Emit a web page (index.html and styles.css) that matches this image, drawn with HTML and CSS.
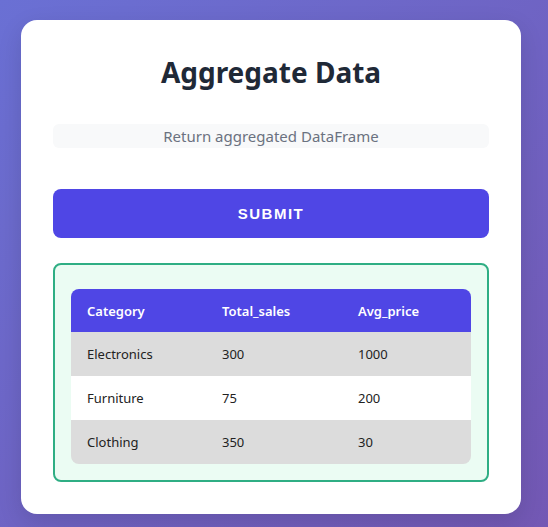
FILE: index.html
```html
<!DOCTYPE html>
<html>
<head>
<meta charset="utf-8">
<link rel="stylesheet" href="styles.css">
</head>
<body>
<div class="card">
  <h2 class="title">Aggregate Data</h2>
  <div class="desc">Return aggregated DataFrame</div>
  <button class="submit">SUBMIT</button>
  <div class="result">
    <table class="data">
      <colgroup><col class="c1"><col class="c2"><col class="c3"></colgroup>
      <thead>
        <tr><th>Category</th><th>Total_sales</th><th>Avg_price</th></tr>
      </thead>
      <tbody>
        <tr><td>Electronics</td><td>300</td><td>1000</td></tr>
        <tr><td>Furniture</td><td>75</td><td>200</td></tr>
        <tr><td>Clothing</td><td>350</td><td>30</td></tr>
      </tbody>
    </table>
  </div>
</div>
</body>
</html>
```
FILE: styles.css
```css
html, body { margin: 0; padding: 0; }
body {
  min-height: 527px;
  background: linear-gradient(135deg, #6a70d4 0%, #7358b4 100%);
  font-family: "Noto Sans", "Open Sans", sans-serif;
  padding: 20px 0 0 21px;
  box-sizing: border-box;
}
.card {
  width: 500px;
  box-sizing: border-box;
  background: #fff;
  border-radius: 16px;
  padding: 32px;
  box-shadow: 0 8px 24px rgba(0,0,0,0.12);
}
.title {
  margin: 0 0 32px;
  text-align: center;
  font-size: 28px;
  font-weight: 700;
  line-height: 40px;
  color: #1f2937;
}
.desc {
  background: #f8f9fa;
  border-radius: 6px;
  text-align: center;
  color: #6b7280;
  font-size: 15px;
  line-height: 24px;
  margin-bottom: 41px;
}
.submit {
  display: block;
  width: 100%;
  height: 49px;
  border: none;
  border-radius: 8px;
  background: #4f46e5;
  color: #fff;
  font-family: "Liberation Sans", Arial, sans-serif;
  font-weight: 700;
  font-size: 15px;
  letter-spacing: 1.5px;
  margin-bottom: 25px;
}
.result {
  border: 2px solid #2fae84;
  background: #ebfcf3;
  border-radius: 8px;
  padding: 24px 16px 16px;
}
.data {
  width: 100%;
  border-collapse: collapse;
  border-radius: 8px;
  overflow: hidden;
  table-layout: fixed;
  font-size: 13px;
}
.c1 { width: 135px; }
.c2 { width: 136px; }
.data th {
  background: #4f46e5;
  color: #fff;
  font-weight: 600;
  text-align: left;
  padding: 0 16px;
  height: 43px;
}
.data td {
  text-align: left;
  padding: 0 16px;
  height: 44px;
  color: #222;
}
.data tbody tr:nth-child(odd) td { background: #dcdcdc; }
.data tbody tr:nth-child(even) td { background: #fff; }
```
